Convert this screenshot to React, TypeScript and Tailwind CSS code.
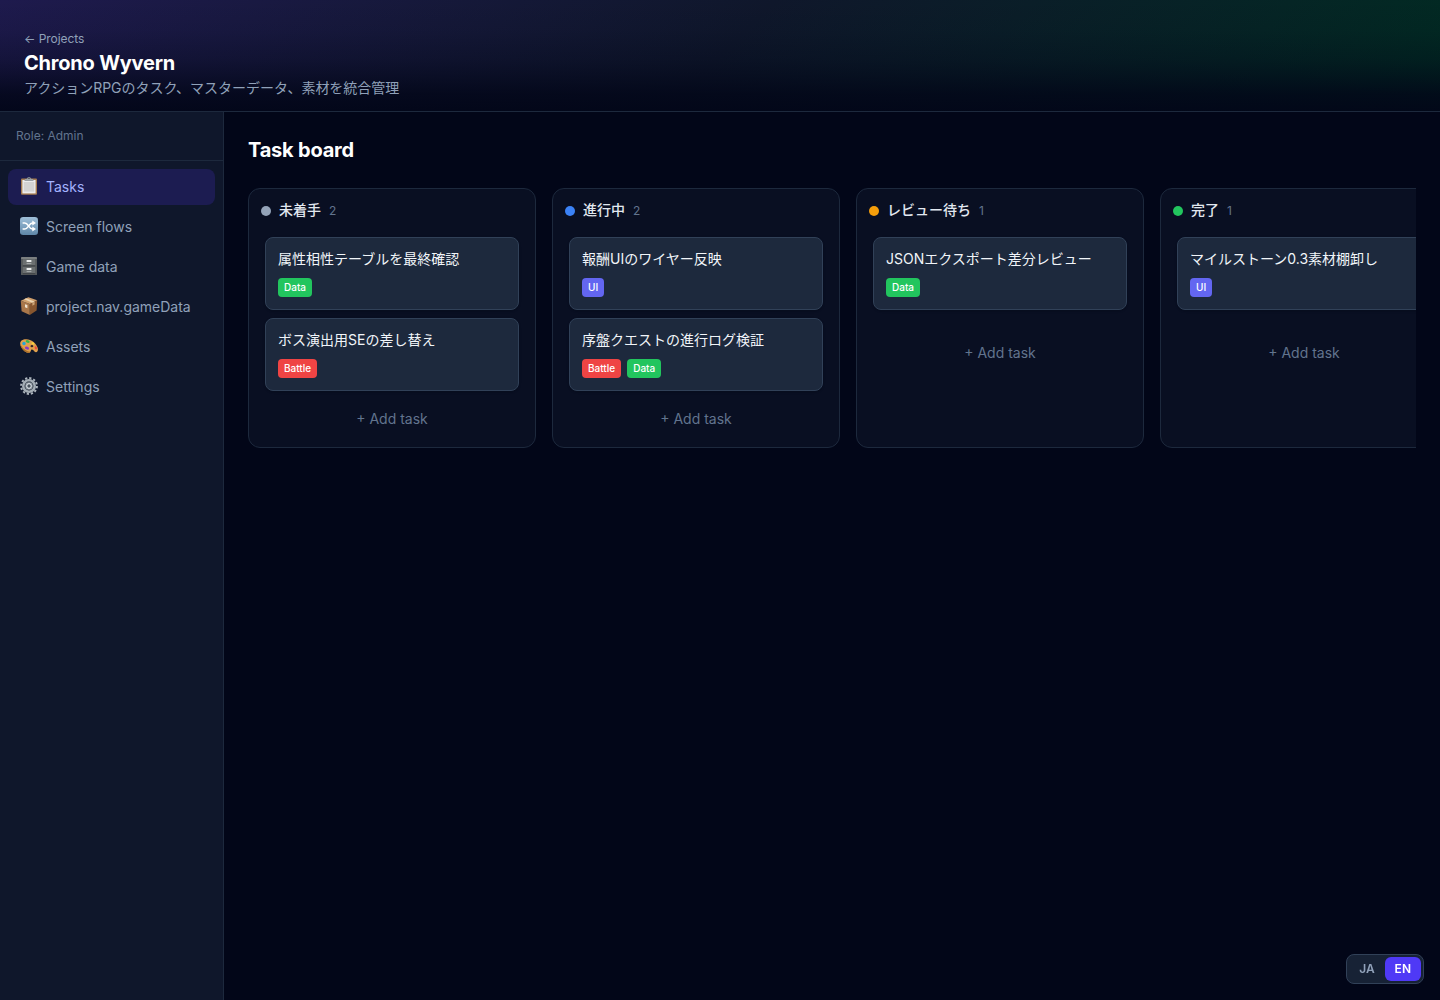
import { useState, type ReactNode } from 'react'
import clsx from 'clsx'

type Tag = 'Data' | 'Battle' | 'UI'

interface Task {
  title: string
  tags: Tag[]
}

interface Column {
  name: string
  dot: string
  tasks: Task[]
}

const tagColors: Record<Tag, string> = {
  Data: 'bg-[#22c55e]',
  Battle: 'bg-[#ef4444]',
  UI: 'bg-[#6366f1]',
}

const columns: Column[] = [
  {
    name: '未着手',
    dot: 'bg-[#94a3b8]',
    tasks: [
      { title: '属性相性テーブルを最終確認', tags: ['Data'] },
      { title: 'ボス演出用SEの差し替え', tags: ['Battle'] },
    ],
  },
  {
    name: '進行中',
    dot: 'bg-[#3b82f6]',
    tasks: [
      { title: '報酬UIのワイヤー反映', tags: ['UI'] },
      { title: '序盤クエストの進行ログ検証', tags: ['Battle', 'Data'] },
    ],
  },
  {
    name: 'レビュー待ち',
    dot: 'bg-[#f59e0b]',
    tasks: [{ title: 'JSONエクスポート差分レビュー', tags: ['Data'] }],
  },
  {
    name: '完了',
    dot: 'bg-[#22c55e]',
    tasks: [{ title: 'マイルストーン0.3素材棚卸し', tags: ['UI'] }],
  },
]

function ClipboardIcon() {
  return (
    <svg viewBox="0 0 18 18" className="size-[18px]">
      <rect x="1" y="1.4" width="16" height="16.4" rx="1" fill="#a57c50" />
      <rect x="2.4" y="3" width="13.2" height="13.4" fill="#ececec" />
      <rect x="3.8" y="5" width="10.4" height="9.6" fill="#d3d3d3" />
      <path d="M4.6 3.9V2.6l2.3-.8C7.2.7 8 0 9 0s1.8.7 2.1 1.8l2.3.8v1.3z" fill="#8c9297" />
      <path d="M5 2.9h8" stroke="#c5cacd" strokeWidth=".6" />
      <circle cx="9" cy="1.4" r=".6" fill="#35363f" />
    </svg>
  )
}

function ShuffleIcon() {
  return (
    <svg viewBox="0 0 18 18" className="size-[18px]">
      <defs>
        <linearGradient id="shuffle" x1="0" y1="0" x2="0" y2="1">
          <stop offset="0" stopColor="#9fbfd9" />
          <stop offset="1" stopColor="#5f87a8" />
        </linearGradient>
      </defs>
      <rect width="18" height="18" rx="3.2" fill="url(#shuffle)" />
      <path
        d="M2.6 6h2.2c3.6 0 4.2 6 7.6 6h.8M2.6 12h2.2c3.6 0 4.2-6 7.6-6h.8"
        fill="none"
        stroke="#fff"
        strokeWidth="1.5"
      />
      <path d="M12.3 3.6 16 6l-3.7 2.4zM12.3 9.6 16 12l-3.7 2.4z" fill="#fff" />
    </svg>
  )
}

function CabinetIcon() {
  return (
    <svg viewBox="0 0 18 18" className="size-[18px]">
      <rect x="1" y="0" width="16" height="18" rx=".5" fill="#55595b" />
      <path d="M1.5 0h15l.5 2H1z" fill="#7b7f80" />
      <rect x="2.8" y="2.2" width="12.4" height="6.3" fill="#6c7071" />
      <rect x="2.8" y="10" width="12.4" height="6.5" fill="#6c7071" />
      <path d="M2.8 8.8h12.4M2.8 16.7h12.4" stroke="#35393b" strokeWidth=".8" />
      <rect x="6.6" y="3" width="4.8" height="2" fill="#eceeee" />
      <rect x="6.6" y="11" width="4.8" height="2" fill="#eceeee" />
      <path d="M6.6 6.6h4.8M6.6 14.6h4.8" stroke="#b8bcbd" strokeWidth=".8" />
    </svg>
  )
}

function PackageIcon() {
  return (
    <svg viewBox="0 0 18 18" className="size-[18px]">
      <path d="M.8 3.8 9.8 7v11L1.6 14.2z" fill="#a9774a" />
      <path d="m17.2 3.2-7.4 3.8v11l6.8-4.4z" fill="#87562f" />
      <path d="M.8 3.8 8.4.2l8.8 3L9.8 7z" fill="#cf9f6c" />
      <path d="m4 2.3 2-1L14.6 4.5l-2.2 1.2z" fill="#ecd5b2" />
      <path d="M5 7.2 7.4 8v3.2L5 10.2z" fill="#f0e3cf" />
      <path d="m12.4 5.7 2.2-1.2v3l-2.2 1.2z" fill="#cba477" />
    </svg>
  )
}

function PaletteIcon() {
  return (
    <svg viewBox="0 0 18 18" className="size-[18px]">
      <path
        d="M.2 7C-.2 3.8 2.8 2 6.4 2.2c4.8.2 9.8 4 11.2 8.2.8 2.6.2 4.6-1.600 4.800-2 .2-2.200-2.600-4-2.600-1.600 0-.8 2.800-2.800 3.200C5.600 16.400.8 11.600.2 7z"
        fill="#e0a04c"
      />
      <path d="M.2 7C.8 11.6 5.6 16.4 9.2 15.8c.8-.2 1.2-.7 1.4-1.200C7 15 2.200 11.200.2 7z" fill="#a86c28" />
      <ellipse cx="4" cy="6.5" rx="1.7" ry="1.8" fill="#22a6d8" />
      <ellipse cx="7.7" cy="4.5" rx="2" ry="1.3" transform="rotate(15 7.7 4.5)" fill="#35b64a" />
      <ellipse cx="7" cy="11.1" rx="2.2" ry="1.4" transform="rotate(25 7 11.1)" fill="#8a3cc4" />
      <ellipse cx="12.8" cy="6.4" rx="1.5" ry="1" transform="rotate(35 12.8 6.4)" fill="#f7d53a" />
      <ellipse cx="15.8" cy="10.9" rx="1.1" ry="1.7" transform="rotate(-20 15.8 10.9)" fill="#ef4b3f" />
      <ellipse cx="11.9" cy="9.2" rx="1.4" ry="1.1" fill="#30232a" />
    </svg>
  )
}

function GearIcon() {
  return (
    <svg viewBox="0 0 18 18" className="size-[18px]">
      <circle cx="9" cy="9" r="7.9" fill="none" stroke="#aeb6be" strokeWidth="2" strokeDasharray="2.2 1.936" />
      <circle cx="9" cy="9" r="5.7" fill="none" stroke="#a4adb5" strokeWidth="2.6" />
      <circle cx="9" cy="9" r="4.4" fill="#59626c" />
      <path
        d="M9 4.5v9M4.5 9h9M5.8 5.8l6.4 6.4M12.2 5.8l-6.4 6.4"
        stroke="#8d98a3"
        strokeWidth=".7"
      />
      <circle cx="9" cy="9" r="2.3" fill="#47515c" stroke="#d3dae0" strokeWidth="1.2" />
    </svg>
  )
}

const navItems: { label: string; icon: ReactNode }[] = [
  { label: 'Tasks', icon: <ClipboardIcon /> },
  { label: 'Screen flows', icon: <ShuffleIcon /> },
  { label: 'Game data', icon: <CabinetIcon /> },
  { label: 'project.nav.gameData', icon: <PackageIcon /> },
  { label: 'Assets', icon: <PaletteIcon /> },
  { label: 'Settings', icon: <GearIcon /> },
]

function TaskCard({ task }: { task: Task }) {
  return (
    <div className="rounded-lg border border-slate-700 bg-slate-800 px-3 pt-[11px] pb-3 shadow-sm">
      <p className="text-sm text-slate-100">{task.title}</p>
      <div className="mt-[9px] flex gap-1.5">
        {task.tags.map((tag) => (
          <span
            key={tag}
            className={clsx('rounded px-1.5 py-0.5 text-[10px] leading-[15px] font-medium text-white', tagColors[tag])}
          >
            {tag}
          </span>
        ))}
      </div>
    </div>
  )
}

function BoardColumn({ column }: { column: Column }) {
  return (
    <section className="w-72 shrink-0 rounded-xl border border-slate-800 bg-slate-900/50">
      <div className="flex items-center gap-2 p-3">
        <span className={clsx('size-2.5 rounded-full', column.dot)} />
        <h3 className="-mt-px mb-px text-sm font-medium text-slate-200">{column.name}</h3>
        <span className="text-xs text-slate-500">{column.tasks.length}</span>
      </div>
      <div className="px-3 pb-3">
        <div className="flex min-h-24 flex-col gap-2 p-1">
          {column.tasks.map((task) => (
            <TaskCard key={task.title} task={task} />
          ))}
        </div>
        <button className="mt-2 w-full rounded-lg py-1.5 text-sm text-slate-500">+ Add task</button>
      </div>
    </section>
  )
}

export default function App() {
  const [activeNav, setActiveNav] = useState('Tasks')
  const [lang, setLang] = useState('EN')

  return (
    <div
      lang="ja"
      className="flex h-screen flex-col overflow-hidden bg-slate-950 font-['Inter','Noto_Sans_CJK_JP',sans-serif] text-slate-100 antialiased"
    >
      <header className="h-28 shrink-0 border-b border-slate-800 bg-[linear-gradient(135deg,#1e1a4d_0%,#0f172b_50%,#002c22_100%)]">
        <div className="flex h-full flex-col justify-end bg-[linear-gradient(to_top,#020618f2_0%,#020618d6_15%,#02061885_33%,#0206184d_47%,#02061814_73%,#02061800_100%)] px-6 pb-[13px]">
          <a href="#" className="text-xs tracking-[-0.005em] text-slate-400">
            ← Projects
          </a>
          <h1 className="mt-0.5 text-xl font-bold tracking-[-0.01em] text-white">Chrono Wyvern</h1>
          <p className="mt-px text-sm tracking-[-0.002em] text-slate-400">
            アクションRPGのタスク、マスターデータ、素材を統合管理
          </p>
        </div>
      </header>

      <div className="flex min-h-0 flex-1">
        <aside className="w-56 shrink-0 border-r border-slate-800 bg-slate-900">
          <div className="border-b border-slate-800 p-4 text-xs text-slate-500">Role: Admin</div>
          <nav className="flex flex-col gap-1 p-2">
            {navItems.map(({ label, icon }) => (
              <button
                key={label}
                onClick={() => setActiveNav(label)}
                className={clsx(
                  'flex h-9 items-center gap-2 rounded-lg px-3 text-sm',
                  activeNav === label ? 'bg-[#1c1c51] text-indigo-300' : 'text-slate-400',
                )}
              >
                <span className="pb-0.5">{icon}</span>
                {label}
              </button>
            ))}
          </nav>
        </aside>

        <main className="min-w-0 flex-1 p-6">
          <h2 className="mb-6 text-xl font-bold tracking-[-0.01em] text-white">Task board</h2>
          <div className="flex gap-4 overflow-hidden">
            {columns.map((column) => (
              <BoardColumn key={column.name} column={column} />
            ))}
          </div>
        </main>
      </div>

      <div className="fixed right-4 bottom-4 flex rounded-lg border border-slate-700 bg-slate-800/80 p-0.5">
        {['JA', 'EN'].map((code) => (
          <button
            key={code}
            onClick={() => setLang(code)}
            className={clsx(
              'rounded-md px-2.5 py-1 text-xs font-semibold',
              lang === code ? 'bg-indigo-600 text-white' : 'text-slate-400',
            )}
          >
            {code}
          </button>
        ))}
      </div>
    </div>
  )
}
